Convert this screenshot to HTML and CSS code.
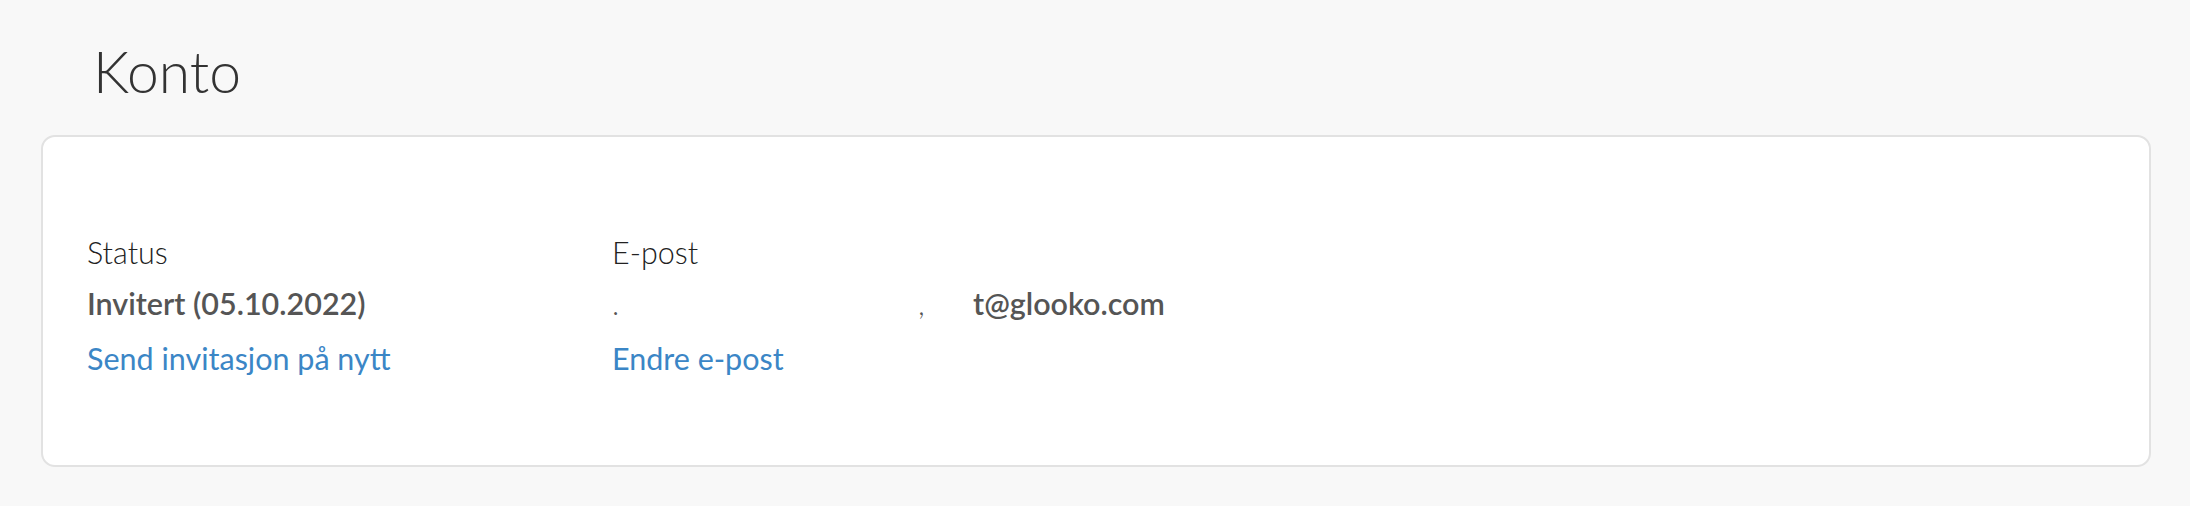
FILE: index.html
```html
<!DOCTYPE html>
<html>
<head>
    <title>Konto</title>
    <link rel="stylesheet" href="styles.css">
</head>
<body>
    <div class="page">
        <h1 class="page-title">Konto</h1>

        <div class="card">
            <div class="field">
                <div class="field-label">Status</div>
                <div class="field-value">Invitert (05.10.2022)</div>
                <a class="field-link" href="#">Send invitasjon på nytt</a>
            </div>

            <div class="field">
                <div class="field-label">E-post</div>
                <div class="field-value email">
                    <span class="mask-a">.</span><span class="mask-b">,</span><span class="email-rest">t@glooko.com</span>
                </div>
                <a class="field-link" href="#">Endre e-post</a>
            </div>
        </div>
    </div>
</body>
</html>
```

FILE: styles.css
```css
/* page */
body {
    margin: 0;
    background-color: #f8f8f8;
    font-family: Lato, "Open Sans", sans-serif;
    color: #333;
}

.page {
    padding: 35px 39px 41px 41px;
}

.page-title {
    margin: 0 0 28px 52px;
    font-size: 57px;
    font-weight: 300;
    line-height: 72px;
    color: #333;
}

/* account card */
.card {
    display: flex;
    background-color: #fff;
    border: 2px solid #e2e2e2;
    border-radius: 14px;
    padding: 95px 44px 83px 44px;
}

.field {
    display: flex;
    flex-direction: column;
    width: 525px;
}

.field-label {
    font-size: 30.5px;
    font-weight: 300;
    line-height: 40px;
    color: #222;
}

.field-value {
    font-size: 30.5px;
    font-weight: 600;
    line-height: 62px;
    color: #555;
    white-space: nowrap;
}

.email {
    display: flex;
}

/* hidden part of the address */
.mask-a,
.mask-b {
    flex: none;
    font-weight: 300;
}

.mask-a {
    width: 306px;
}

.mask-b {
    width: 55px;
}

.email-rest {
    flex: none;
}

.field-link {
    font-size: 30.5px;
    line-height: 48px;
    color: #3b86c6;
    text-decoration: none;
}
```
